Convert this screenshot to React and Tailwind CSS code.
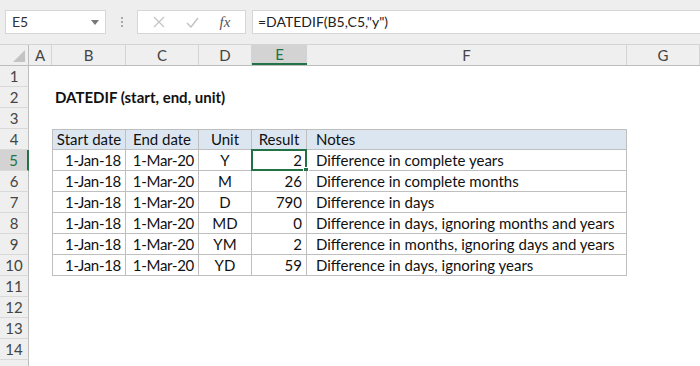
import React from 'react';

const COLS = [
  { key: 'A', w: 'w-[23px]' },
  { key: 'B', w: 'w-[74px]' },
  { key: 'C', w: 'w-[73px]' },
  { key: 'D', w: 'w-[53px]' },
  { key: 'E', w: 'w-[55px]' },
  { key: 'F', w: 'w-[320px]' },
  { key: 'G', w: 'w-[73px]' },
];

const DATA = [
  ['Y', 2, 'Difference in complete years'],
  ['M', 26, 'Difference in complete months'],
  ['D', 790, 'Difference in days'],
  ['MD', 0, 'Difference in days, ignoring months and years'],
  ['YM', 2, 'Difference in months, ignoring days and years'],
  ['YD', 59, 'Difference in days, ignoring years'],
];

const font = { fontFamily: 'Lato, "Noto Sans", sans-serif' };

function RowHeader({ n, active }) {
  return (
    <div
      className={
        'w-[29px] h-[21px] shrink-0 flex items-center justify-center text-[15px] leading-none border-b border-[#d9d9d9] ' +
        (active
          ? 'bg-[#d3d3d3] text-[#217346] border-r-2 border-r-[#217346]'
          : 'bg-[#efefef] text-[#444] border-r border-r-[#bdbdbd]')
      }
    >
      {n}
    </div>
  );
}

function TableRow({ cells, header, top }) {
  const base =
    'h-[21px] shrink-0 flex items-center whitespace-nowrap leading-none text-[15px] text-[#111] border-r border-b border-[#bfbfbf] px-[4px] ';
  const bg = header ? 'bg-[#dce6f1] ' : 'bg-white ';
  const t = top ? 'border-t ' : '';
  const dateCls = header ? 'justify-center' : 'justify-end tracking-[-0.3px]';
  return (
    <>
      <div className={base + bg + t + 'w-[74px] border-l ' + dateCls}>{cells[0]}</div>
      <div className={base + bg + t + 'w-[73px] ' + dateCls}>{cells[1]}</div>
      <div className={base + bg + t + 'w-[53px] justify-center'}>{cells[2]}</div>
      <div className={base + bg + t + 'w-[55px] ' + (header ? 'justify-center' : 'justify-end')}>{cells[3]}</div>
      <div className={base + bg + t + 'w-[320px] justify-start px-[9px]'}>{cells[4]}</div>
    </>
  );
}

export default function App() {
  const rows = [];
  for (let i = 1; i <= 15; i++) {
    let content = null;
    if (i === 2) {
      content = (
        <>
          <div className="w-[23px] shrink-0" />
          <div className="pl-[3px] flex items-center font-bold text-[15px] leading-none text-[#111] whitespace-nowrap">
            DATEDIF (start, end, unit)
          </div>
        </>
      );
    } else if (i === 4) {
      content = (
        <>
          <div className="w-[23px] shrink-0" />
          <TableRow header top cells={['Start date', 'End date', 'Unit', 'Result', 'Notes']} />
        </>
      );
    } else if (i >= 5 && i <= 10) {
      const d = DATA[i - 5];
      content = (
        <>
          <div className="w-[23px] shrink-0" />
          <TableRow cells={['1-Jan-18', '1-Mar-20', d[0], d[1], d[2]]} />
        </>
      );
    }
    rows.push(
      <div key={i} className="flex h-[21px]">
        <RowHeader n={i < 15 ? i : ''} active={i === 5} />
        <div className="relative flex flex-1">
          {content}
          {i === 5 && (
            <div className="absolute left-[222px] top-[-1px] w-[56px] h-[22px] border-2 border-[#217346] pointer-events-none">
              <div className="absolute right-[-4px] bottom-[-4px] w-[6px] h-[6px] bg-[#217346] border border-white" />
            </div>
          )}
        </div>
      </div>
    );
  }

  return (
    <div className="w-[700px] h-[366px] overflow-hidden bg-white" style={font}>
      {/* formula bar */}
      <div className="h-[45px] bg-[#eeeeee] flex items-center border-b border-[#d4d4d4]">
        <div className="ml-[5px] w-[101px] h-[24px] bg-white border border-[#d6d6d6] flex items-center justify-between px-[6px] text-[14px] leading-none text-[#333]">
          <span>E5</span>
          <svg width="8" height="5" viewBox="0 0 8 5"><path d="M0 0h8L4 5z" fill="#777" /></svg>
        </div>
        <div className="w-[31px] flex flex-col items-center gap-[2px]">
          <span className="w-[2px] h-[2px] bg-[#aaa]" />
          <span className="w-[2px] h-[2px] bg-[#aaa]" />
          <span className="w-[2px] h-[2px] bg-[#aaa]" />
        </div>
        <div className="w-[109px] h-[24px] bg-white border border-[#d6d6d6] flex items-center justify-around px-[4px]">
          <svg width="12" height="12" viewBox="0 0 12 12"><path d="M1 1l10 10M11 1L1 11" stroke="#c4c4c4" strokeWidth="1.3" /></svg>
          <svg width="13" height="11" viewBox="0 0 13 11"><path d="M1 6l4 4 7-9" stroke="#c4c4c4" strokeWidth="1.5" fill="none" /></svg>
          <span className="text-[15px] italic text-[#555]" style={{ fontFamily: '"Liberation Serif", serif' }}>fx</span>
        </div>
        <div className="ml-[6px] flex-1 h-[24px] bg-white border border-[#d6d6d6] border-r-0 flex items-center pl-[5px] text-[14px] leading-none text-[#222]">
          =DATEDIF(B5,C5,"y")
        </div>
      </div>
      {/* column headers */}
      <div className="flex h-[21px] bg-[#efefef] border-b border-[#bdbdbd]">
        <div className="w-[29px] shrink-0 relative border-r border-[#bdbdbd]">
          <svg className="absolute right-[3px] bottom-[3px]" width="12" height="12" viewBox="0 0 12 12"><path d="M12 0V12H0z" fill="#c3c3c3" /></svg>
        </div>
        {COLS.map((c) => (
          <div
            key={c.key}
            className={
              c.w +
              ' shrink-0 flex items-center justify-center text-[15px] leading-none ' +
              (c.key === 'E'
                ? 'bg-[#d3d3d3] text-[#217346] border-b-2 border-[#217346]'
                : 'text-[#444] border-r border-[#d4d4d4]')
            }
          >
            {c.key}
          </div>
        ))}
      </div>
      {rows}
    </div>
  );
}
